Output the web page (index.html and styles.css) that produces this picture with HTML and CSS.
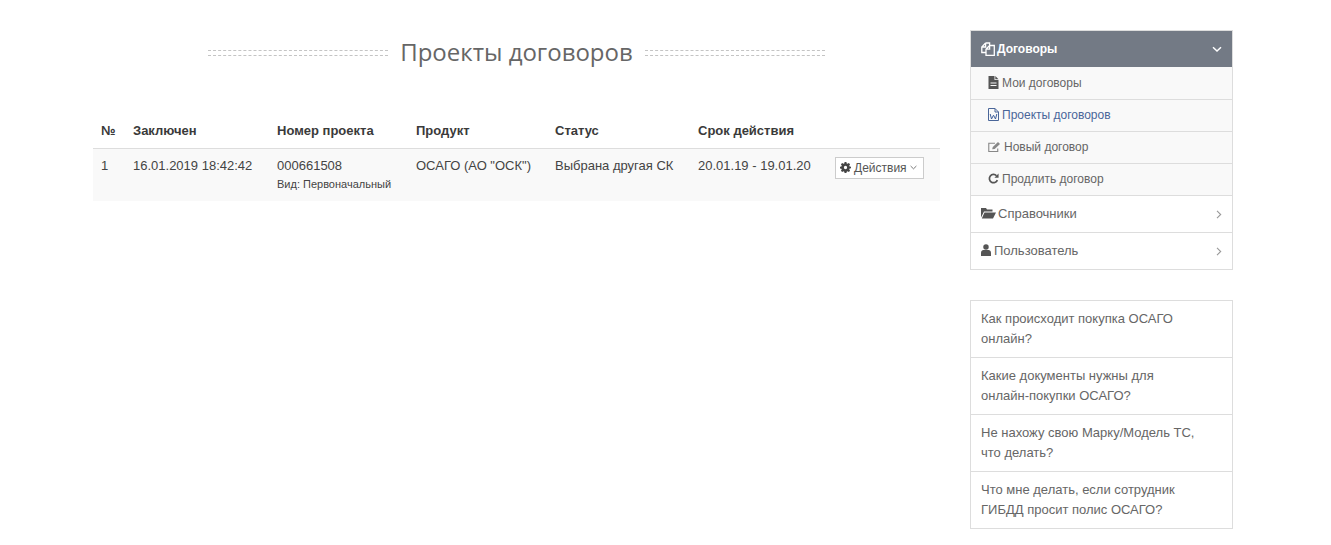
FILE: index.html
```html
<!DOCTYPE html>
<html lang="ru">
<head>
<meta charset="utf-8">
<title>Проекты договоров</title>
<link rel="stylesheet" href="styles.css">
</head>
<body>
<div class="page">
  <main class="main">
    <div class="title-row">
      <span class="dash"></span>
      <h1 class="title">Проекты договоров</h1>
      <span class="dash"></span>
    </div>
    <table class="table">
      <thead>
        <tr>
          <th class="c-n">№</th>
          <th class="c-date">Заключен</th>
          <th class="c-num">Номер проекта</th>
          <th class="c-prod">Продукт</th>
          <th class="c-status">Статус</th>
          <th class="c-term">Срок действия</th>
          <th class="c-act"></th>
        </tr>
      </thead>
      <tbody>
        <tr>
          <td>1</td>
          <td>16.01.2019 18:42:42</td>
          <td>000661508<div class="sub">Вид: Первоначальный</div></td>
          <td>ОСАГО (АО "ОСК")</td>
          <td>Выбрана другая СК</td>
          <td>20.01.19 - 19.01.20</td>
          <td><button class="btn"><svg class="ic-gear" viewBox="0 0 12 12"><path fill="#444" fill-rule="evenodd" d="M5 0h2l.3 1.600 1 .4 1.300-.9L11 2.500l-.9 1.300.4 1 1.500.3v1.800l-1.500.3-.4 1 .9 1.300L9.600 11l-1.300-.9-1 .4L7 12H5l-.3-1.500-1-.4-1.300.9L1 9.600l.9-1.300-.4-1L0 7V5.100l1.500-.3.4-1L1 2.500 2.400 1.100l1.300.9 1-.4zM6 4.200a1.800 1.800 0 1 0 0 3.600 1.800 1.800 0 0 0 0-3.600z"/></svg> Действия <svg class="ic-caret" viewBox="0 0 8 5"><path d="M.7.8 4 4l3.300-3.200" fill="none" stroke="#666" stroke-width="1"/></svg></button></td>
        </tr>
      </tbody>
    </table>
  </main>
  <aside class="side">
    <nav class="menu">
      <div class="menu-head">
        <span class="menu-label"><svg class="ic-head" viewBox="0 0 14 14"><path fill="none" stroke="#fff" stroke-width="1.300" d="M4.600 1h4v3.200M4.600 1 .8 5v5.500h4M.8 5h3.800V1M8.600 3.500h4.700v9.800H5V7.200zM8.600 3.500v3.700H5"/></svg>Договоры</span>
        <svg class="chev" viewBox="0 0 10 7"><path d="M1 1.200 5 5l4-3.800" fill="none" stroke="#fff" stroke-width="1.500"/></svg>
      </div>
      <a class="sub-item"><svg class="ic" viewBox="0 0 11 13"><path fill="#555" fill-rule="evenodd" d="M.5 0h6v4h4v9H.5zM7.300 0l3.200 3.200H7.300zM2.500 6.500v1h6v-1zM2.500 9v1h6V9z"/></svg>Мои договоры</a>
      <a class="sub-item active"><svg class="ic" viewBox="0 0 11 13"><path fill="none" stroke="#4a6699" d="M.5.500h6.500l3.500 3.500v8.500H.5zM7 .5V4h3.500"/><path fill="none" stroke="#3f5f9a" d="M2.200 6l1.300 5 2-3.800 2 3.800 1.300-5"/></svg>Проекты договоров</a>
      <a class="sub-item"><svg class="ic-wide" viewBox="0 0 14 13"><path fill="none" stroke="#888" stroke-width="1.200" d="M10.500 8v3.400H.8V2.500H7.500"/><path fill="#888" d="M4.500 9l.6-2.500L10.800 1 13 3.200 7.200 8.700z"/></svg>Новый договор</a>
      <a class="sub-item"><svg class="ic" viewBox="0 0 12 13"><path fill="none" stroke="#555" stroke-width="1.900" d="M10.200 8.300A4.500 4.500 0 1 1 9.300 3.500"/><path fill="#555" d="M11.500 1v4.600H7z"/></svg>Продлить договор</a>
      <a class="item"><span class="item-label"><svg class="ic-folder" viewBox="0 0 15 12"><path fill="#555" d="M0 10.500V1h5l1 1.500h5.500V4.500H3L0 10.500zM3.500 5.500H15l-3 6H.8z"/></svg>Справочники</span><svg class="chev-r" viewBox="0 0 6 9"><path d="M1 .8l3.700 3.700L1 8.200" fill="none" stroke="#999" stroke-width="1.100"/></svg></a>
      <a class="item"><span class="item-label"><svg class="ic-user" viewBox="0 0 11 13"><circle cx="5.500" cy="3.200" r="3" fill="#555"/><path fill="#555" d="M0 13V9.500C0 7.500 1.500 6.500 2.500 6.500h6c1 0 2.500 1 2.500 3V13z"/></svg>Пользователь</span><svg class="chev-r" viewBox="0 0 6 9"><path d="M1 .8l3.700 3.700L1 8.200" fill="none" stroke="#999" stroke-width="1.100"/></svg></a>
    </nav>
    <div class="faq">
      <a class="faq-item">Как происходит покупка ОСАГО<br>онлайн?</a>
      <a class="faq-item">Какие документы нужны для<br>онлайн-покупки ОСАГО?</a>
      <a class="faq-item">Не нахожу свою Марку/Модель ТС,<br>что делать?</a>
      <a class="faq-item">Что мне делать, если сотрудник<br>ГИБДД просит полис ОСАГО?</a>
    </div>
  </aside>
</div>
</body>
</html>
```
FILE: styles.css
```css
* { box-sizing: border-box; }
html, body { margin: 0; padding: 0; background: #fff; }
body { font-family: "Liberation Sans", Arial, sans-serif; font-size: 13px; color: #333; overflow: hidden; }
.page { display: flex; align-items: flex-start; width: 1331px; height: 545px; padding: 30px 0 0 93px; gap: 30px; }
.main { width: 847px; }
.title-row { display: flex; align-items: center; justify-content: center; gap: 12px; height: 46px; }
.title { margin: 0; padding-bottom: 2px; font: 400 24px/44px "Open Sans", sans-serif; color: #666; }
.dash { width: 180px; height: 6px; border-top: 1px dashed #c4c4c4; border-bottom: 1px dashed #c4c4c4; }
.table { width: 847px; margin-top: 39px; border-collapse: collapse; table-layout: fixed; }
th { height: 33px; padding: 0 8px 2px; font-size: 13px; font-weight: 700; text-align: left; color: #3a3a3a; border-bottom: 1px solid #ddd; }
td { height: 53px; padding: 7px 8px 5px; vertical-align: top; color: #444; background: #f9f9f9; line-height: 20px; }
.c-n { width: 32px; }
.c-date { width: 144px; }
.c-num, .c-prod { width: 139px; }
.c-status { width: 143px; }
.c-term { width: 137px; }
.sub { font-size: 11px; line-height: 16px; color: #444; }
.btn { display: inline-flex; align-items: center; gap: 3px; height: 22px; margin-top: 1px; padding: 0 6px 0 4px; background: #fff; border: 1px solid #ccc; font: 12px "Liberation Sans", sans-serif; color: #555; }
.ic-gear { width: 11px; height: 11px; }
.ic-caret { width: 7px; height: 5px; }
.side { width: 263px; display: flex; flex-direction: column; gap: 30px; }
.menu, .faq { border: 1px solid #ddd; }
.menu-head { display: flex; align-items: center; justify-content: space-between; height: 37px; padding: 0 10px; background: #737a85; border-bottom: 1px solid #f9f9f9; color: #fff; font-size: 12px; font-weight: 700; }
.menu-label, .item-label { display: flex; align-items: center; }
.item-label { padding-bottom: 2px; }
.ic-head { width: 14px; height: 14px; margin-right: 2px; flex: none; }
.ic { width: 11px; height: 13px; margin-right: 3px; flex: none; }
.ic-wide { width: 13px; height: 12px; margin-right: 3px; flex: none; }
.ic-folder { width: 15px; height: 12px; margin-right: 2px; flex: none; }
.ic-user { width: 10px; height: 12px; margin-right: 3px; flex: none; }
.chev { width: 10px; height: 7px; }
.chev-r { width: 6px; height: 9px; }
.sub-item { display: flex; align-items: center; height: 32px; padding: 0 0 2px 17px; font-size: 12px; color: #666; background: #f9f9f9; border-bottom: 1px solid #ddd; }
.sub-item.active { color: #4a6699; }
.item { display: flex; align-items: center; justify-content: space-between; height: 36px; padding: 0 10px; font-size: 13px; color: #666; }
.item + .item { height: 37px; border-top: 1px solid #ddd; }
.faq-item { display: block; height: 57px; padding: 8px 10px; font-size: 13px; line-height: 20px; color: #666; border-bottom: 1px solid #ddd; }
.faq-item:last-child { border-bottom: 0; height: 56px; }
```
